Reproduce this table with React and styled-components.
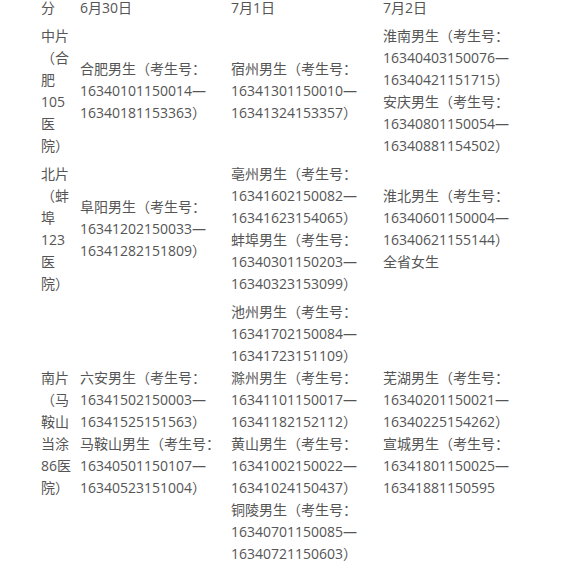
import React from 'react';
import styled, { createGlobalStyle } from "styled-components";

const Global = createGlobalStyle`
body {
  margin: 0;
  background: #fff;
}
`;

const Page = styled.div`
width: 571px;
height: 567px;
overflow: hidden;
padding-left: 41px;
box-sizing: border-box;
`;

const Table = styled.table`
margin-top: -9px;
border-collapse: collapse;
table-layout: fixed;
width: 494px;
font-family: "Open Sans", "Noto Sans CJK SC", sans-serif;
font-size: 14px;
line-height: 22px;
color: #555;
`;

const Row = styled.tr`
vertical-align: ${(props) => props.align || "middle"};
`;

const Cell = styled.td`
padding: ${(props) => (props.tight ? "0" : "6px")} ${(props) => props.pr || 8}px 0 0;
`;

const Line = styled.div``;

const cols = [39, 151, 152, 152];

// 每个考生号段: 城市, 起, 止
const Group = ({ name, from, to, noClose }) => (
  <Line>{name}男生（考生号：{from}—{to}{noClose ? "" : "）"}</Line>
);

const rows = [
  {
    area: "中片（合肥105医院）",
    d1: [["合肥", "16340101150014", "16340181153363"]],
    d2: [["宿州", "16341301150010", "16341324153357"]],
    d3: [
      ["淮南", "16340403150076", "16340421151715"],
      ["安庆", "16340801150054", "16340881154502"],
    ],
  },
  {
    area: "北片（蚌埠123医院）",
    d1: [["阜阳", "16341202150033", "16341282151809"]],
    d2: [
      ["亳州", "16341602150082", "16341623154065"],
      ["蚌埠", "16340301150203", "16340323153099"],
    ],
    d3: [["淮北", "16340601150004", "16340621155144"]],
    extra: "全省女生",
  },
  {
    area: "",
    d1: [],
    d2: [["池州", "16341702150084", "16341723151109"]],
    d3: [],
    align: "top",
  },
  {
    area: "南片（马鞍山当涂86医院）",
    d1: [
      ["六安", "16341502150003", "16341525151563"],
      ["马鞍山", "16340501150107", "16340523151004"],
    ],
    d2: [
      ["滁州", "16341101150017", "16341182152112"],
      ["黄山", "16341002150022", "16341024150437"],
      ["铜陵", "16340701150085", "16340721150603"],
    ],
    d3: [
      ["芜湖", "16340201150021", "16340225154262"],
      ["宣城", "16341801150025", "16341881150595", true],
    ],
    align: "top",
    tight: true,
  },
];

function App() {
  return (
    <>
      <Global />
      <Page>
        <Table>
          <colgroup>
            {cols.map((w, i) => <col key={i} style={{ width: w }} />)}
          </colgroup>
          <tbody>
            <Row>
              <Cell pr={5}>分</Cell>
              <Cell>6月30日</Cell>
              <Cell>7月1日</Cell>
              <Cell>7月2日</Cell>
            </Row>
            {rows.map((r, idx) => (
              <Row key={idx} align={r.align}>
                <Cell pr={5} tight={r.tight}>{r.area}</Cell>
                <Cell tight={r.tight}>
                  {r.d1.map((g) => <Group key={g[0]} name={g[0]} from={g[1]} to={g[2]} noClose={g[3]} />)}
                </Cell>
                <Cell tight={r.tight}>
                  {r.d2.map((g) => <Group key={g[0]} name={g[0]} from={g[1]} to={g[2]} noClose={g[3]} />)}
                </Cell>
                <Cell tight={r.tight}>
                  {r.d3.map((g) => <Group key={g[0]} name={g[0]} from={g[1]} to={g[2]} noClose={g[3]} />)}
                  {r.extra && <Line>{r.extra}</Line>}
                </Cell>
              </Row>
            ))}
          </tbody>
        </Table>
      </Page>
    </>
  );
}

export default App;
